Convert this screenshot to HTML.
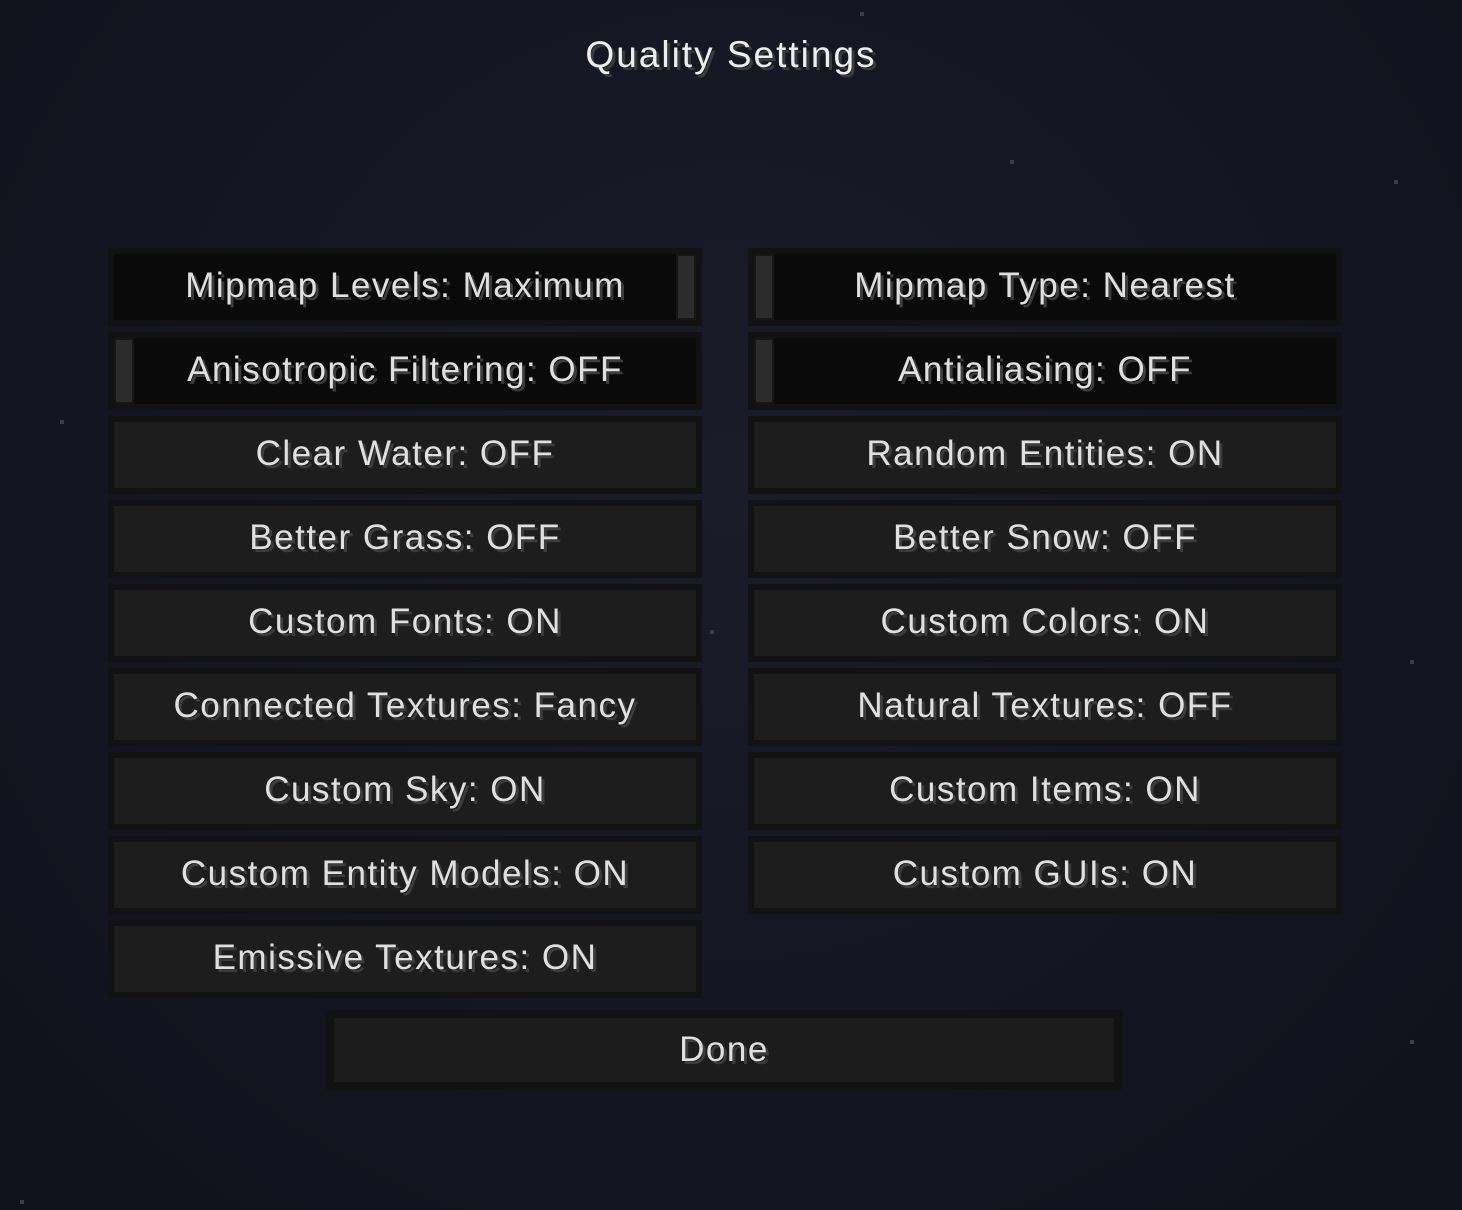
<!DOCTYPE html>
<html><head><meta charset="utf-8"><style>
html,body{margin:0;padding:0}
body{width:1462px;height:1210px;overflow:hidden;position:relative;
background:radial-gradient(ellipse at 50% 40%,#1b1c2a 0%,#141521 60%,#10111a 100%);
font-family:"Liberation Sans",sans-serif;}
.t{position:absolute;left:0;width:1462px;top:34px;text-align:center;color:#eee;font-size:37px;letter-spacing:2px;text-shadow:3px 3px 0 #3a3a3a}
.b{position:absolute;box-sizing:border-box;width:594px;height:78px;border:6px solid #121212;background:#1d1d1d;color:#e0e0e0;font-size:35px;letter-spacing:1.5px;text-align:center;line-height:64px;text-shadow:3px 3px 0 #3c3c3c;white-space:nowrap}
.s{background:#0a0a0a}
.h{position:absolute;width:16px;height:62px;background:#2c2c2c;border:2px solid #161616;box-sizing:content-box;top:0}
.star{position:absolute;width:4px;height:4px;background:#3a3c50}
</style></head><body>
<div class="star" style="left:1010px;top:160px"></div>
<div class="star" style="left:1394px;top:180px"></div>
<div class="star" style="left:860px;top:12px"></div>
<div class="star" style="left:1410px;top:660px"></div>
<div class="star" style="left:1410px;top:1040px"></div>
<div class="star" style="left:60px;top:420px"></div>
<div class="star" style="left:710px;top:630px"></div>
<div class="star" style="left:20px;top:1200px"></div>
<div class="t">Quality Settings</div>

<div class="b s" style="left:108px;top:248px">Mipmap Levels: Maximum<div class="h" style="right:0"></div></div>
<div class="b s" style="left:748px;top:248px">Mipmap Type: Nearest<div class="h" style="left:0"></div></div>
<div class="b s" style="left:108px;top:332px"><div class="h" style="left:0"></div>Anisotropic Filtering: OFF</div>
<div class="b s" style="left:748px;top:332px"><div class="h" style="left:0"></div>Antialiasing: OFF</div>
<div class="b" style="left:108px;top:416px">Clear Water: OFF</div>
<div class="b" style="left:748px;top:416px">Random Entities: ON</div>
<div class="b" style="left:108px;top:500px">Better Grass: OFF</div>
<div class="b" style="left:748px;top:500px">Better Snow: OFF</div>
<div class="b" style="left:108px;top:584px">Custom Fonts: ON</div>
<div class="b" style="left:748px;top:584px">Custom Colors: ON</div>
<div class="b" style="left:108px;top:668px">Connected Textures: Fancy</div>
<div class="b" style="left:748px;top:668px">Natural Textures: OFF</div>
<div class="b" style="left:108px;top:752px">Custom Sky: ON</div>
<div class="b" style="left:748px;top:752px">Custom Items: ON</div>
<div class="b" style="left:108px;top:836px">Custom Entity Models: ON</div>
<div class="b" style="left:748px;top:836px">Custom GUIs: ON</div>
<div class="b" style="left:108px;top:920px">Emissive Textures: ON</div>
<div class="b" style="left:326px;top:1010px;width:796px;height:80px;border-width:8px;background:#1c1c1c;line-height:64px">Done</div>
</body></html>
